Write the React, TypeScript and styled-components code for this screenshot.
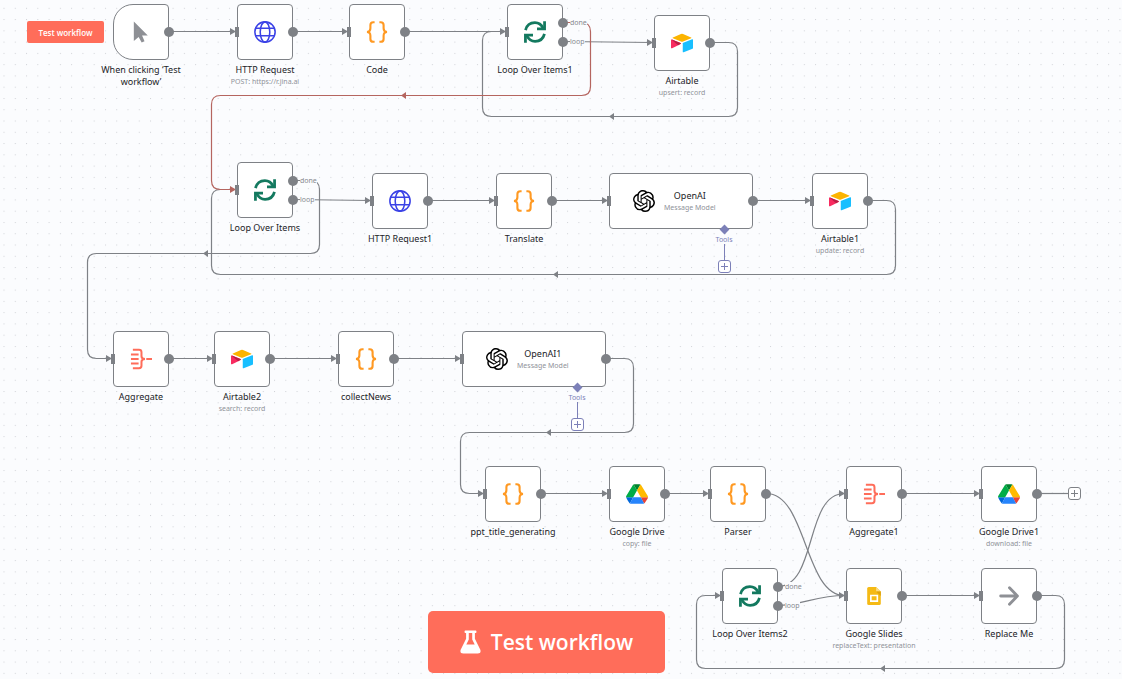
import React from "react";
import styled, { createGlobalStyle, css } from "styled-components";
import { SiOpenai } from "react-icons/si";

const LINE = "#7e8186";
const ERROR = "#b5655f";
const PURPLE = "#7c80b8";
const CANVAS = "#fbfcfe";
const PRIMARY = "#ff6d5a";

const GlobalStyle = createGlobalStyle`
  * { box-sizing: border-box; }
  body {
    margin: 0;
    background: ${CANVAS};
    font-family: "Noto Sans", "Open Sans", sans-serif;
  }
  button { font-family: "Open Sans", "Noto Sans", sans-serif; cursor: pointer; }
`;

const Canvas = styled.main`
  position: relative;
  min-height: 100vh;
  overflow: hidden;
  background: ${CANVAS};
`;

const Wires = styled.svg`
  position: absolute;
  inset: 0;
  width: 100%;
  height: 100%;
  fill: none;
`;

const NodeRoot = styled.article<{ $x: number; $y: number; $w: number }>`
  position: absolute;
  left: ${(p) => p.$x}px;
  top: ${(p) => p.$y}px;
  width: ${(p) => p.$w}px;
  display: flex;
  flex-direction: column;
  align-items: center;
`;

const Box = styled.div<{ $trigger?: boolean; $wide?: boolean }>`
  width: 100%;
  height: 56px;
  display: flex;
  align-items: center;
  justify-content: center;
  background: #fff;
  border: 1px solid ${LINE};
  border-radius: ${(p) => (p.$trigger ? "20px 4px 4px 20px" : "4px")};
  ${(p) =>
    p.$wide &&
    css`
      justify-content: flex-start;
      gap: 9px;
      padding-left: 23px;
    `}
  svg {
    flex: none;
    width: 22px;
    height: 22px;
  }
`;

const Caption = styled.div`
  width: 112px;
  padding-top: 4px;
  text-align: center;
`;

const InnerCaption = styled.div`
  padding-top: 2px;
  text-align: center;
`;

const Name = styled.h3`
  margin: 0;
  font-size: 9px;
  line-height: 12px;
  font-weight: 400;
  color: #222327;
`;

const Detail = styled.p`
  margin: 0;
  font-size: 7px;
  line-height: 12px;
  color: #8f9299;
  white-space: nowrap;
`;

const InputPort = styled.span`
  position: absolute;
  left: -2px;
  top: 23px;
  width: 4px;
  height: 10px;
  background: ${LINE};
`;

const OutputPort = styled.span<{ $top: number }>`
  position: absolute;
  right: -5px;
  top: ${(p) => p.$top}px;
  width: 10px;
  height: 10px;
  border-radius: 50%;
  background: ${LINE};
`;

const PortLabel = styled.span<{ $top: number }>`
  position: absolute;
  left: 63px;
  top: ${(p) => p.$top}px;
  font-size: 7px;
  line-height: 9px;
  color: #85888e;
  background: ${CANVAS};
`;

const ToolSlot = styled.div`
  position: absolute;
  left: 105px;
  top: 52px;
  width: 20px;
  display: flex;
  flex-direction: column;
  align-items: center;
`;

const Diamond = styled.span`
  width: 7px;
  height: 7px;
  margin: 1px 0 2px;
  background: ${PURPLE};
  transform: rotate(45deg);
`;

const ToolLabel = styled.span`
  font-size: 7px;
  line-height: 9px;
  color: ${PURPLE};
`;

const ToolStem = styled.span`
  width: 1px;
  height: 16px;
  background: ${PURPLE};
`;

const PlusButton = styled.button<{ $color: string }>`
  display: flex;
  align-items: center;
  justify-content: center;
  width: 13px;
  height: 13px;
  padding: 0;
  border: 1px solid ${(p) => p.$color};
  border-radius: 3px;
  background: #fff;
  color: ${(p) => p.$color};
  svg {
    width: 7px;
    height: 7px;
  }
`;

const EndSlot = styled.div`
  position: absolute;
  left: 87px;
  top: 21px;
`;

const RunButton = styled.button<{ $large?: boolean }>`
  position: absolute;
  display: flex;
  align-items: center;
  justify-content: center;
  border: 0;
  padding: 0;
  color: #fff;
  background: ${PRIMARY};
  font-weight: 600;
  ${(p) =>
    p.$large
      ? css`
          left: 428px;
          top: 611px;
          width: 237px;
          height: 62px;
          gap: 10px;
          border-radius: 5px;
          font-size: 21px;
        `
      : css`
          left: 27px;
          top: 21px;
          width: 77px;
          height: 22px;
          border-radius: 2px;
          font-size: 8px;
        `}
`;

const Cursor = () => (
  <svg viewBox="0 0 23 23" aria-hidden="true">
    <path d="M4 0.5V21L9 16.6L12.2 22.6L15.2 21.2L12.6 15.2H18.6Z" fill="#8e9095" />
  </svg>
);

const Globe = () => (
  <svg viewBox="0 0 23 23" fill="none" stroke="#3b42e6" strokeWidth="1.6" aria-hidden="true">
    <circle cx="11.5" cy="11.5" r="10.6" />
    <ellipse cx="11.5" cy="11.5" rx="5" ry="10.6" />
    <path d="M1.6 7.6H21.4M1.6 15.4H21.4" />
  </svg>
);

const Braces = () => (
  <svg viewBox="0 0 23 23" fill="none" stroke="#ff9922" strokeWidth="2.2" aria-hidden="true">
    <path d="M9 1.3H7.6Q4.6 1.3 4.6 4.3V7.6Q4.6 11.4 1 11.5Q4.6 11.6 4.6 15.4V18.7Q4.6 21.7 7.6 21.7H9" />
    <path d="M14 1.3H15.4Q18.4 1.3 18.4 4.3V7.6Q18.4 11.4 22 11.5Q18.4 11.6 18.4 15.4V18.7Q18.4 21.7 15.4 21.7H14" />
  </svg>
);

const Sync = () => (
  <svg viewBox="0 0 23 23" fill="none" stroke="#13795f" strokeWidth="2.9" aria-hidden="true">
    <path d="M1.6 9.6C2.8 4.8 6.6 1.8 11.4 1.8C15.4 1.8 18.2 3.8 20 7.6" />
    <path d="M21.5 0.2V8.2H13.6" />
    <path d="M21.4 13.4C20.2 18.2 16.4 21.2 11.6 21.2C7.6 21.2 4.8 19.2 3 15.4" />
    <path d="M1.5 22.8V14.8H9.4" />
  </svg>
);

const AirtableMark = () => (
  <svg viewBox="0 0 23 23" aria-hidden="true">
    <path d="M10.4 2.2Q11.5 1.7 12.6 2.2L21 5.8Q21.8 6.2 21 6.5L12.6 9.9Q11.5 10.3 10.4 9.9L2 6.5Q1.2 6.2 2 5.8Z" fill="#fcb400" />
    <path d="M12.3 12.1Q12.3 11.5 12.9 11.2L22.1 7.7Q23 7.4 23 8.2V16.8Q23 17.3 22.5 17.5L13.2 21.1Q12.3 21.4 12.3 20.6Z" fill="#18bfff" />
    <path d="M0 8.4Q0 7.5 0.9 7.8L10.6 11.8L9.7 12.8L1.2 16.9Q0 17.4 0 16.5Z" fill="#f82b60" />
    <path d="M0.9 7.8L10.6 11.8L7.4 13.9L0.7 8.1Z" fill="#ba1e45" />
  </svg>
);

const Merge = () => (
  <svg viewBox="0 0 23 23" fill="none" stroke={PRIMARY} strokeWidth="2.1" aria-hidden="true">
    <path d="M3 1.8H9.4Q12 1.8 12 4.4V8.6Q12 11.2 15.6 11.5Q12 11.8 12 14.4V18.6Q12 21.2 9.4 21.2H3" />
    <path d="M1 6.7H9M1 11.5H9M1 16.3H9M17 11.5H23" />
  </svg>
);

const Drive = () => (
  <svg viewBox="0 0 23 23" aria-hidden="true">
    <path d="M1.8 18.3L0 15H7.5L4.1 21.4Q3.5 21.1 3.2 20.5Z" fill="#0066da" />
    <path d="M11.5 7.9L7.9 1.6Q7.4 1.9 7.1 2.4L0.4 13.4Q0 14.2 0 15H7.5Z" fill="#00ac47" />
    <path d="M18.9 21.4Q19.6 21.1 19.9 20.5L22.5 16.4Q23 15.8 23 15H15.5L17.1 18.2Z" fill="#ea4335" />
    <path d="M11.5 7.9L15.1 1.6Q14.5 1.3 13.9 1.3H9.1Q8.5 1.3 7.9 1.6Z" fill="#00832d" />
    <path d="M15.5 15H7.5L4.1 21.4Q4.7 21.7 5.4 21.7H17.6Q18.3 21.7 18.9 21.4Z" fill="#2684fc" />
    <path d="M15.5 15H23Q23 14.2 22.6 13.4L15.9 2.4Q15.6 1.9 15.1 1.6L11.5 7.9Z" fill="#ffba00" />
  </svg>
);

const Slides = () => (
  <svg viewBox="0 0 23 23" aria-hidden="true">
    <path d="M6 2H13.7L18.6 6.9V19.4Q18.6 21 17 21H6Q4.4 21 4.4 19.4V3.6Q4.4 2 6 2Z" fill="#f5ba15" />
    <path d="M13.7 2L18.6 6.9H13.7Z" fill="#fbdc86" />
    <path d="M13.7 6.9H18.6V11.4Z" fill="#dca20f" />
    <path d="M8.2 11H15V16.8H8.2Z" fill="none" stroke="#fff" strokeWidth="1.7" />
  </svg>
);

const Arrow = () => (
  <svg viewBox="0 0 23 23" fill="none" stroke="#8e9095" strokeWidth="3" strokeLinecap="round" strokeLinejoin="round" aria-hidden="true">
    <path d="M2.8 11.5H20M12 3L20.3 11.5L12 20" />
  </svg>
);

const Plus = () => (
  <svg viewBox="0 0 7 7" fill="none" stroke="currentColor" strokeWidth="1" aria-hidden="true">
    <path d="M3.5 0V7M0 3.5H7" />
  </svg>
);

const Flask = () => (
  <svg width="21" height="24" viewBox="0 0 22 25" aria-hidden="true">
    <path
      fillRule="evenodd"
      d="M5.6 0.5H16.4Q17.2 0.5 17.2 1.3V2.3Q17.2 3.1 16.4 3.1H15.6V9.2L21.3 20.6Q22.4 24.5 18.6 24.5H3.4Q-0.4 24.5 0.7 20.6L6.4 9.2V3.1H5.6Q4.8 3.1 4.8 2.3V1.3Q4.8 0.5 5.6 0.5ZM9.2 3.1V10L6.6 15.2H15.4L12.8 10V3.1Z"
      fill="#fff"
    />
  </svg>
);

const ICONS = {
  cursor: Cursor,
  globe: Globe,
  braces: Braces,
  sync: Sync,
  airtable: AirtableMark,
  merge: Merge,
  drive: Drive,
  slides: Slides,
  arrow: Arrow,
  openai: () => <SiOpenai color="#000" aria-hidden="true" />,
};

type NodeData = {
  name: string;
  icon: keyof typeof ICONS;
  x: number;
  y: number;
  detail?: string;
  kind?: "trigger" | "loop" | "model" | "last";
};

const NODES: NodeData[] = [
  { name: "When clicking ‘Test workflow’", icon: "cursor", x: 113, y: 4, kind: "trigger" },
  { name: "HTTP Request", icon: "globe", x: 237, y: 4, detail: "POST: https://r.jina.ai" },
  { name: "Code", icon: "braces", x: 349, y: 4 },
  { name: "Loop Over Items1", icon: "sync", x: 507, y: 4, kind: "loop" },
  { name: "Airtable", icon: "airtable", x: 654, y: 15, detail: "upsert: record" },
  { name: "Loop Over Items", icon: "sync", x: 237, y: 162, kind: "loop" },
  { name: "HTTP Request1", icon: "globe", x: 372, y: 173 },
  { name: "Translate", icon: "braces", x: 496, y: 173 },
  { name: "OpenAI", icon: "openai", x: 609, y: 173, detail: "Message Model", kind: "model" },
  { name: "Airtable1", icon: "airtable", x: 812, y: 173, detail: "update: record" },
  { name: "Aggregate", icon: "merge", x: 113, y: 331 },
  { name: "Airtable2", icon: "airtable", x: 214, y: 331, detail: "search: record" },
  { name: "collectNews", icon: "braces", x: 338, y: 331 },
  { name: "OpenAI1", icon: "openai", x: 462, y: 331, detail: "Message Model", kind: "model" },
  { name: "ppt_title_generating", icon: "braces", x: 485, y: 466 },
  { name: "Google Drive", icon: "drive", x: 609, y: 466, detail: "copy: file" },
  { name: "Parser", icon: "braces", x: 710, y: 466 },
  { name: "Aggregate1", icon: "merge", x: 846, y: 466 },
  { name: "Google Drive1", icon: "drive", x: 981, y: 466, detail: "download: file", kind: "last" },
  { name: "Loop Over Items2", icon: "sync", x: 722, y: 568, kind: "loop" },
  { name: "Google Slides", icon: "slides", x: 846, y: 568, detail: "replaceText: presentation" },
  { name: "Replace Me", icon: "arrow", x: 981, y: 568 },
];

type Point = [number, number];

/* Joins points with straight runs and rounds each corner. */
function rounded(points: Point[], radius = 9) {
  let d = `M${points[0].join(" ")}`;
  for (let i = 1; i < points.length - 1; i++) {
    const [px, py] = points[i - 1];
    const [x, y] = points[i];
    const [nx, ny] = points[i + 1];
    const inLen = Math.hypot(x - px, y - py);
    const outLen = Math.hypot(nx - x, ny - y);
    const r = Math.min(radius, inLen, outLen);
    const ax = x - ((x - px) / inLen) * r;
    const ay = y - ((y - py) / inLen) * r;
    const bx = x + ((nx - x) / outLen) * r;
    const by = y + ((ny - y) / outLen) * r;
    d += `L${ax} ${ay}Q${x} ${y} ${bx} ${by}`;
  }
  return d + `L${points[points.length - 1].join(" ")}`;
}

const STRAIGHT: [Point, Point][] = [
  [[168, 31], [235, 31]],
  [[292, 31], [347, 31]],
  [[405, 31], [505, 31]],
  [[563, 41], [652, 42]],
  [[292, 199], [370, 200]],
  [[428, 200], [494, 200]],
  [[552, 200], [607, 200]],
  [[753, 200], [810, 200]],
  [[168, 358], [212, 358]],
  [[270, 358], [336, 358]],
  [[394, 358], [460, 358]],
  [[540, 493], [607, 493]],
  [[665, 493], [708, 493]],
  [[901, 493], [979, 493]],
  [[1037, 493], [1068, 493]],
  [[901, 595], [979, 595]],
];

const ROUTES: Point[][] = [
  [[710, 42], [737, 42], [737, 116], [482, 116], [482, 31], [505, 31]],
  [[868, 200], [895, 200], [895, 274], [211, 274], [211, 189], [226, 189]],
  [[292, 180], [319, 180], [319, 253], [87, 253], [87, 358], [111, 358]],
  [[606, 358], [633, 358], [633, 432], [460, 432], [460, 493], [483, 493]],
  [[1037, 595], [1064, 595], [1064, 668], [696, 668], [696, 595], [720, 595]],
];

const ERROR_ROUTE: Point[] = [[563, 22], [590, 22], [590, 95], [211, 95], [211, 189], [235, 189]];

const CURVES = [
  "M766 493C806 493 804 595 844 595",
  "M777 586C817 586 804 493 844 493",
  "M777 605C800 605 816 595 844 595",
];

const MIDPOINTS: Point[] = [[609, 116], [553, 274], [203, 253], [546, 432], [880, 668]];

function Background() {
  return (
    <Wires aria-hidden="true">
      <defs>
        <pattern
          id="dots"
          width="20"
          height="20"
          patternUnits="userSpaceOnUse"
          patternTransform="translate(3.5 7.8) scale(0.5636)"
        >
          <rect width="1.8" height="1.8" fill="#d0d2d7" />
        </pattern>
      </defs>
      <rect width="100%" height="100%" fill="url(#dots)" />
      <g transform="translate(0.5 0.5)" stroke={LINE} strokeWidth="1.2">
        {STRAIGHT.map(([a, b], i) => (
          <path key={i} d={`M${a.join(" ")}L${b.join(" ")}`} />
        ))}
        {ROUTES.map((points, i) => (
          <path key={i} d={rounded(points)} />
        ))}
        {CURVES.map((d) => (
          <path key={d} d={d} />
        ))}
        <path d={rounded(ERROR_ROUTE)} stroke={ERROR} />
      </g>
      <g transform="translate(0 0.5)">
        {MIDPOINTS.map(([x, y]) => (
          <path key={`${x}-${y}`} d={`M${x} ${y}l5 -3.5v7z`} fill={LINE} />
        ))}
        <path d="M401 95l5 -3.5v7z" fill={ERROR} />
        {NODES.filter((n) => n.kind !== "trigger").map((n) => (
          <path
            key={n.name}
            d={`M${n.x - 7} ${n.y + 23.5}v7l6 -3.5z`}
            fill={n.name === "Loop Over Items" ? ERROR : LINE}
          />
        ))}
      </g>
    </Wires>
  );
}

function WorkflowNode({ node }: { node: NodeData }) {
  const Icon = ICONS[node.icon];
  const model = node.kind === "model";
  const text = (
    <>
      <Name>{node.name}</Name>
      {node.detail && <Detail>{node.detail}</Detail>}
    </>
  );
  return (
    <NodeRoot $x={node.x} $y={node.y} $w={model ? 144 : 56}>
      <Box $trigger={node.kind === "trigger"} $wide={model}>
        <Icon />
        {model && <InnerCaption>{text}</InnerCaption>}
      </Box>
      {!model && <Caption>{text}</Caption>}
      {node.kind !== "trigger" && <InputPort />}
      {node.kind === "loop" ? (
        <>
          <OutputPort $top={14} />
          <OutputPort $top={33} />
          <PortLabel $top={14}>done</PortLabel>
          <PortLabel $top={33}>loop</PortLabel>
        </>
      ) : (
        <OutputPort $top={23} />
      )}
      {model && (
        <ToolSlot>
          <Diamond />
          <ToolLabel>Tools</ToolLabel>
          <ToolStem />
          <PlusButton $color={PURPLE} aria-label={`Add tool to ${node.name}`}>
            <Plus />
          </PlusButton>
        </ToolSlot>
      )}
      {node.kind === "last" && (
        <EndSlot>
          <PlusButton $color={LINE} aria-label="Add node">
            <Plus />
          </PlusButton>
        </EndSlot>
      )}
    </NodeRoot>
  );
}

export default function App() {
  return (
    <>
      <GlobalStyle />
      <Canvas>
        <Background />
        {NODES.map((node) => (
          <WorkflowNode key={node.name} node={node} />
        ))}
        <RunButton>Test workflow</RunButton>
        <RunButton $large>
          <Flask />
          Test workflow
        </RunButton>
      </Canvas>
    </>
  );
}
